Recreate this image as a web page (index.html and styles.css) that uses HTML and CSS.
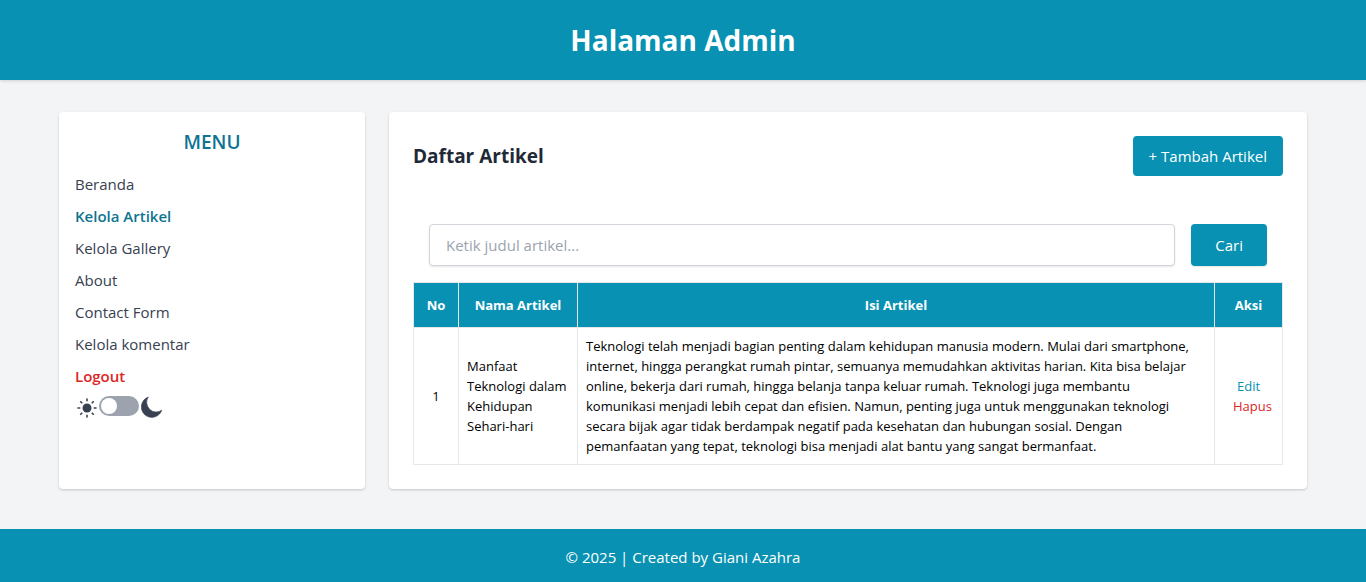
FILE: index.html
```html
<!DOCTYPE html>
<html lang="id">
<head>
<meta charset="utf-8">
<meta name="viewport" content="width=device-width, initial-scale=1">
<title>Halaman Admin</title>
<link rel="stylesheet" href="styles.css">
</head>
<body>
<header class="site-header"><h1 class="site-title">Halaman Admin</h1></header>
<div class="layout">
  <aside class="card sidebar">
    <h2 class="menu-title">MENU</h2>
    <nav>
      <ul class="menu">
        <li><a href="#">Beranda</a></li>
        <li><a class="active" href="#">Kelola Artikel</a></li>
        <li><a href="#">Kelola Gallery</a></li>
        <li><a href="#">About</a></li>
        <li><a href="#">Contact Form</a></li>
        <li><a href="#">Kelola komentar</a></li>
        <li><a class="logout" href="#">Logout</a></li>
      </ul>
    </nav>
    <div class="theme">
      <svg class="sun" viewBox="0 0 24 24" aria-hidden="true">
        <circle cx="12" cy="12" r="5.4" fill="currentColor"/>
        <path d="M12 0.5v3.5M12 20v3.5M0.5 12h3.5M20 12h3.5M3.9 3.9l2.4 2.4M17.7 17.7l2.4 2.4M3.9 20.1l2.4-2.4M17.7 6.3l2.4-2.4" fill="none" stroke="currentColor" stroke-width="1.9"/>
      </svg>
      <input class="theme-switch" type="checkbox" role="switch" aria-label="Mode gelap">
      <svg class="moon" viewBox="0 0 22 22" aria-hidden="true">
        <path d="M7.3 1A9.6 9.6 0 0 0 20.8 14.2A10.5 10.5 0 1 1 7.3 1z" fill="currentColor" stroke="currentColor" stroke-width="0.6" stroke-linejoin="round"/>
      </svg>
    </div>
  </aside>
  <main class="card content">
    <div class="content-head">
      <h2 class="content-title">Daftar Artikel</h2>
      <a class="button" href="#">+ Tambah Artikel</a>
    </div>
    <form class="search">
      <input class="search-input" type="text" placeholder="Ketik judul artikel..." aria-label="Judul artikel">
      <button class="button search-button" type="button">Cari</button>
    </form>
    <table class="articles">
      <colgroup><col class="col-no"><col class="col-name"><col><col class="col-action"></colgroup>
      <thead>
        <tr><th>No</th><th>Nama Artikel</th><th>Isi Artikel</th><th>Aksi</th></tr>
      </thead>
      <tbody>
        <tr>
          <td class="center">1</td>
          <td>Manfaat Teknologi dalam Kehidupan Sehari-hari</td>
          <td class="body-text">Teknologi telah menjadi bagian penting dalam kehidupan manusia modern. Mulai dari smartphone, internet, hingga perangkat rumah pintar, semuanya memudahkan aktivitas harian. Kita bisa belajar online, bekerja dari rumah, hingga belanja tanpa keluar rumah. Teknologi juga membantu komunikasi menjadi lebih cepat dan efisien. Namun, penting juga untuk menggunakan teknologi secara bijak agar tidak berdampak negatif pada kesehatan dan hubungan sosial. Dengan pemanfaatan yang tepat, teknologi bisa menjadi alat bantu yang sangat bermanfaat.</td>
          <td class="center"><a class="edit" href="#">Edit</a> <a class="delete" href="#">Hapus</a></td>
        </tr>
      </tbody>
    </table>
  </main>
</div>
<footer class="site-footer">© 2025 | Created by Giani Azahra</footer>
</body>
</html>
```
FILE: styles.css
```css
*, *::before, *::after { box-sizing: border-box; }
body {
  margin: 0;
  min-height: 100vh;
  display: flex;
  flex-direction: column;
  background: #f3f4f6;
  color: #000;
  font: 15px/24px "Segoe UI", "Open Sans", sans-serif;
}
h1, h2, ul { margin: 0; padding: 0; }
a { text-decoration: none; }
input, button { font: inherit; }

.site-header {
  padding: 20px 16px;
  background: #0891b2;
  color: #fff;
  text-align: center;
  box-shadow: 0 1px 3px rgb(0 0 0 / 0.15);
}
.site-title { font-size: 28px; line-height: 40px; font-weight: 700; }

.layout {
  display: grid;
  grid-template-columns: 1fr 3fr;
  gap: 24px;
  width: 100%;
  max-width: 1280px;
  margin: 0 auto;
  padding: 32px 16px 40px;
}
.card {
  min-width: 0;
  background: #fff;
  border-radius: 4px;
  box-shadow: 0 1px 3px rgb(0 0 0 / 0.1), 0 1px 2px rgb(0 0 0 / 0.1);
}
.sidebar { padding: 16px; }
.menu-title {
  margin-bottom: 16px;
  color: #0e7490;
  font-size: 19px;
  line-height: 28px;
  font-weight: 600;
  text-align: center;
}
.menu { display: grid; gap: 8px; list-style: none; }
.menu a { color: #374151; }
.menu .active { color: #0e7490; font-weight: 600; }
.menu .logout { color: #dc2626; font-weight: 600; }

.theme {
  display: flex;
  align-items: flex-end;
  gap: 2px;
  padding: 8px 2px;
  color: #374151;
}
.sun { width: 20px; height: 20px; }
.moon { width: 22px; height: 22px; }
.theme-switch {
  appearance: none;
  align-self: flex-start;
  width: 40px;
  height: 20px;
  margin: 0;
  padding: 2px;
  border-radius: 10px;
  background: #9ca3af;
}
.theme-switch::before {
  content: "";
  display: block;
  width: 16px;
  height: 16px;
  border-radius: 50%;
  background: #fff;
}
.theme-switch:checked::before { margin-left: auto; }

.content { padding: 24px; }
.content-head {
  display: flex;
  justify-content: space-between;
  align-items: center;
  margin-bottom: 32px;
}
.content-title { color: #1f2937; font-size: 19px; line-height: 28px; font-weight: 700; }
.button {
  padding: 8px 16px;
  border: 0;
  border-radius: 4px;
  background: #0891b2;
  color: #fff;
}
.search { display: flex; gap: 16px; padding: 16px; }
.search-input {
  flex: 1;
  min-width: 0;
  height: 42px;
  padding: 8px 16px;
  border: 1px solid #d1d5db;
  border-radius: 4px;
  background: #fff;
  box-shadow: 0 1px 2px rgb(0 0 0 / 0.1);
}
.search-input::placeholder { color: #9ca3af; }
.search-button { padding: 8px 24px; box-shadow: 0 1px 2px rgb(0 0 0 / 0.1); }

.articles {
  width: 100%;
  table-layout: fixed;
  border-collapse: collapse;
  font-size: 13px;
  line-height: 20px;
}
.col-no { width: 45px; }
.col-name { width: 119px; }
.col-action { width: 68px; }
.articles th, .articles td { border: 1px solid #e5e7eb; }
.articles th { padding: 12px 8px; background: #0891b2; color: #fff; font-weight: 700; }
.articles td { padding: 8px; }
.articles .body-text { padding-right: 16px; }
.articles .center { text-align: center; }
.edit { color: #0891b2; }
.delete { margin-left: 8px; color: #dc2626; }

.site-footer {
  flex: 1;
  padding-top: 16px;
  background: #0891b2;
  color: #fff;
  text-align: center;
}
```
